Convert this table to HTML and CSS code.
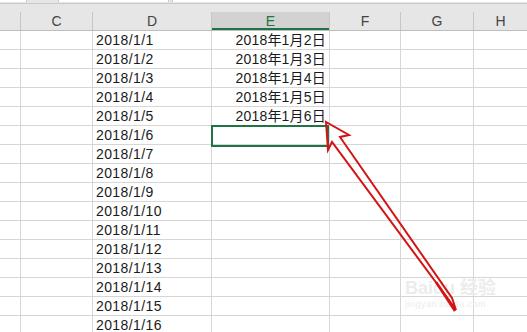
FILE: index.html
```html
<!DOCTYPE html>
<html>
<head>
<meta charset="utf-8">
<link rel="stylesheet" href="styles.css">
</head>
<body>
<div class="sheet">
  <div class="topbar">
    <div class="tb-box tb-a"></div>
    <div class="tb-gap"></div>
    <div class="tb-box tb-b"></div>
    <div class="tb-gap2"></div>
    <div class="tb-box tb-c"></div>
  </div>
  <div class="band"></div>
  <div class="grid head">
    <div class="hc"></div>
    <div class="hc">C</div>
    <div class="hc">D</div>
    <div class="hc sel">E</div>
    <div class="hc">F</div>
    <div class="hc">G</div>
    <div class="hc last">H</div>
  </div>
  <div class="grid body">
    <div class="c"></div><div class="c"></div><div class="c dcol">2018/1/1</div><div class="c ecol">2018年1月2日</div><div class="c"></div><div class="c"></div><div class="c last"></div>
    <div class="c"></div><div class="c"></div><div class="c dcol">2018/1/2</div><div class="c ecol">2018年1月3日</div><div class="c"></div><div class="c"></div><div class="c last"></div>
    <div class="c"></div><div class="c"></div><div class="c dcol">2018/1/3</div><div class="c ecol">2018年1月4日</div><div class="c"></div><div class="c"></div><div class="c last"></div>
    <div class="c"></div><div class="c"></div><div class="c dcol">2018/1/4</div><div class="c ecol">2018年1月5日</div><div class="c"></div><div class="c"></div><div class="c last"></div>
    <div class="c"></div><div class="c"></div><div class="c dcol">2018/1/5</div><div class="c ecol">2018年1月6日</div><div class="c"></div><div class="c"></div><div class="c last"></div>
    <div class="c"></div><div class="c"></div><div class="c dcol">2018/1/6</div><div class="c ecol active"></div><div class="c"></div><div class="c"></div><div class="c last"></div>
    <div class="c"></div><div class="c"></div><div class="c dcol">2018/1/7</div><div class="c ecol"></div><div class="c"></div><div class="c"></div><div class="c last"></div>
    <div class="c"></div><div class="c"></div><div class="c dcol">2018/1/8</div><div class="c ecol"></div><div class="c"></div><div class="c"></div><div class="c last"></div>
    <div class="c"></div><div class="c"></div><div class="c dcol">2018/1/9</div><div class="c ecol"></div><div class="c"></div><div class="c"></div><div class="c last"></div>
    <div class="c"></div><div class="c"></div><div class="c dcol">2018/1/10</div><div class="c ecol"></div><div class="c"></div><div class="c"></div><div class="c last"></div>
    <div class="c"></div><div class="c"></div><div class="c dcol">2018/1/11</div><div class="c ecol"></div><div class="c"></div><div class="c"></div><div class="c last"></div>
    <div class="c"></div><div class="c"></div><div class="c dcol">2018/1/12</div><div class="c ecol"></div><div class="c"></div><div class="c"></div><div class="c last"></div>
    <div class="c"></div><div class="c"></div><div class="c dcol">2018/1/13</div><div class="c ecol"></div><div class="c"></div><div class="c"></div><div class="c last"></div>
    <div class="c"></div><div class="c"></div><div class="c dcol">2018/1/14</div><div class="c ecol"></div><div class="c"></div><div class="c"></div><div class="c last"></div>
    <div class="c"></div><div class="c"></div><div class="c dcol">2018/1/15</div><div class="c ecol"></div><div class="c"></div><div class="c"></div><div class="c last"></div>
    <div class="c"></div><div class="c"></div><div class="c dcol">2018/1/16</div><div class="c ecol"></div><div class="c"></div><div class="c"></div><div class="c last"></div>
  </div>
  <div class="watermark">
    <div class="wm1">Baidu 经验</div>
    <div class="wm2">jingyan.baidu.com</div>
  </div>
  <svg class="arrow" width="527" height="332" viewBox="0 0 527 332">
    <polygon points="326,122 328,150 332,142 449,300 456,310 452,298 340,137 349,135" fill="none" stroke="#d41414" stroke-width="2" stroke-linejoin="miter"/>
    <line x1="436" y1="282" x2="455" y2="311" stroke="#d41414" stroke-width="2.5"/>
  </svg>
</div>
</body>
</html>
```

FILE: styles.css
```css
html, body {
  margin: 0;
  padding: 0;
  background: #ffffff;
}
.sheet {
  position: relative;
  width: 527px;
  height: 332px;
  overflow: hidden;
  font-family: "Liberation Sans", "Noto Sans CJK SC", sans-serif;
  color: #1a1a1a;
}
.topbar {
  display: flex;
  height: 3px;
  background: #e6e6e6;
  border-bottom: 1px solid #c9c9c9;
}
.tb-box {
  background: #ffffff;
  height: 2px;
  border-right: 1px solid #c9c9c9;
}
.tb-a { width: 26px; }
.tb-gap { width: 31px; }
.tb-b { width: 109px; border-left: 1px solid #c9c9c9; }
.tb-gap2 { width: 3px; }
.tb-c { flex: 1; border-left: 1px solid #c9c9c9; border-right: none; }
.band {
  height: 8px;
  background: #e6e6e6;
}
.grid {
  display: grid;
  grid-template-columns: 21px 72px 119px 118px 71px 73px 53px;
}
.head {
  height: 18px;
  background: #e6e6e6;
  border-bottom: 1px solid #bdbdbd;
}
.hc {
  border-right: 1px solid #c6c6c6;
  font-size: 14px;
  line-height: 18px;
  text-align: center;
  color: #444444;
}
.hc.sel {
  background: #d2d2d2;
  color: #217346;
  box-shadow: inset 0 -2px 0 #217346;
}
.hc.last { border-right: none; }
.body {
  grid-auto-rows: 19px;
}
.c {
  border-right: 1px solid #d6d6d6;
  border-bottom: 1px solid #d6d6d6;
  font-size: 14px;
  line-height: 19px;
  white-space: nowrap;
}
.c.last { border-right: none; }
.dcol {
  padding-left: 3px;
  letter-spacing: 0.4px;
}
.ecol {
  text-align: right;
  padding-right: 3px;
  letter-spacing: 0.2px;
}
.active {
  position: relative;
}
.active::after {
  content: "";
  position: absolute;
  left: -1px;
  top: -1px;
  width: 114px;
  height: 18px;
  border: 2px solid #217346;
}
.watermark {
  position: absolute;
  left: 405px;
  top: 278px;
  color: #ececec;
}
.wm1 {
  font-size: 18px;
  font-weight: bold;
  line-height: 20px;
}
.wm2 {
  font-size: 9px;
  line-height: 12px;
  letter-spacing: 0.5px;
}
.arrow {
  position: absolute;
  left: 0;
  top: 0;
}
```
